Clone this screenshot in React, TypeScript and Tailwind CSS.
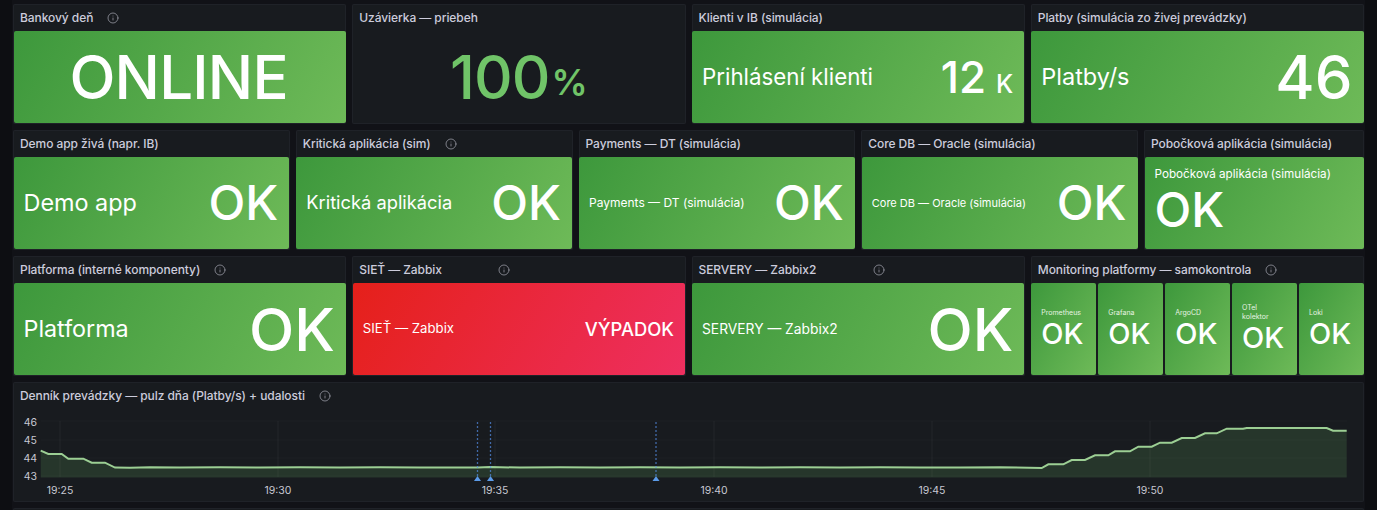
import { Info } from "lucide-react"
import type { ReactNode } from "react"

const green = "bg-[linear-gradient(120deg,#3d983c,#6eba58)]"
const red = "bg-[linear-gradient(120deg,#e5201a,#ee2f60)]"

function Panel({ title, info, gap = "ml-[14px]", children }: { title: string; info?: boolean; gap?: string; children: ReactNode }) {
	return (
		<div className="flex h-[120px] flex-col rounded-[2px] bg-[#181b1f] shadow-[inset_0_0_0_1px_#1f2228]">
			<div className="flex h-[27px] shrink-0 items-center px-[7px] pt-[1px] text-[12px] font-medium tracking-[-0.07px] text-[#ccccdc]">
				<span className="whitespace-nowrap">{title}</span>
				{info && <Info size={12} strokeWidth={1.5} className={`${gap} text-[#9d9fa9]`} />}
			</div>
			<div className="flex min-h-0 flex-1 gap-[2.5px] px-[0.5px] pb-[1px]">{children}</div>
		</div>
	)
}

function Tile({ label, value, labelSize, valueSize, unit, color = green }: { label?: string; value: string; labelSize?: string; valueSize: string; unit?: string; color?: string }) {
	return (
		<div className={`flex flex-1 items-center justify-between rounded-[2px] pl-[10px] pr-[11px] text-white ${color}`}>
			<span className={`whitespace-nowrap ${labelSize}`}>{label}</span>
			<span className={`whitespace-nowrap font-medium leading-none ${valueSize}`}>
				{value}
				{unit && <span className="ml-[10px] text-[25px]">{unit}</span>}
			</span>
		</div>
	)
}

function MiniTile({ children }: { children: ReactNode }) {
	return (
		<div className={`flex flex-1 flex-col justify-center rounded-[2px] px-[10px] text-white ${green}`}>
			<span className="text-[7px] leading-[9px] text-[#e6f3e2]">{children}</span>
			<span className="text-[29px] font-medium leading-[34px]">OK</span>
		</div>
	)
}

const leftLine = "40.7,450.7 48.3,454 61.7,454 68.3,458.7 83.3,458.7 91.7,462.7 105,462.7 115,467.6 130,467.8 150,467.2 180,467.6 220,467.2 260,467.6 300,467.2 340,467.6 380,467.2 420,467.6 478,467.4 490,467 520,467.6 560,467.2 600,467.6 640,467.2 680,467.6 720,467.2 760,467.6 800,467.2 840,467.6 880,467.2 920,467.4 960,467.6 1000,467.2 1041.7,468"
const rightLine = "1048.3,464.3 1063.3,464.3 1071.7,460 1085,460 1095,455.3 1108.3,455.3 1115,451.3 1130,451.3 1138.3,446.7 1151.7,446.7 1160,442.7 1171.7,442.7 1181.7,438 1195,438 1205,433.3 1216.7,433.3 1226.7,428.7 1243,428.7 1246.7,428 1326.7,428 1333,430.7 1346.7,430.7"
const line = `${leftLine} ${rightLine}`

function Chart() {
	const ticks = [
		{ x: 60, t: "19:25" },
		{ x: 278, t: "19:30" },
		{ x: 495, t: "19:35" },
		{ x: 714, t: "19:40" },
		{ x: 932, t: "19:45" },
		{ x: 1150, t: "19:50" },
	]
	return (
		<svg viewBox="13 409 1351 92" className="h-[92px] w-[1351px]">
			{[421, 440, 458, 476].map(y => (
				<line key={y} x1="41" x2="1347" y1={y} y2={y} stroke="#ffffff" strokeOpacity="0.025" />
			))}
			{ticks.map(k => (
				<line key={k.x} x1={k.x} x2={k.x} y1="421" y2="477" stroke="#ffffff" strokeOpacity="0.05" />
			))}
			<polygon points={`40.7,477.5 ${line} 1346.7,477.5`} fill="#73bf69" fillOpacity="0.17" />
			<polyline points={line} fill="none" stroke="#9ccf94" strokeWidth="2" />
			{[477.5, 490.5, 656].map(x => (
				<g key={x}>
					<line x1={x} x2={x} y1="422" y2="477" stroke="#5794f2" strokeOpacity="0.65" strokeWidth="1.3" strokeDasharray="2 2" />
					<polygon points={`${x - 3.5},481 ${x + 3.5},481 ${x},476`} fill="#5b9be8" />
				</g>
			))}
			<g fontSize="10.5" fill="#c7c8d2" fontFamily="Inter, sans-serif">
				<text x="37" y="425.5" textAnchor="end">46</text>
				<text x="37" y="444" textAnchor="end">45</text>
				<text x="37" y="462" textAnchor="end">44</text>
				<text x="37" y="480" textAnchor="end">43</text>
				{ticks.map(k => (
					<text key={k.x} x={k.x} y="493.5" textAnchor="middle">{k.t}</text>
				))}
			</g>
		</svg>
	)
}

export default function App() {
	return (
		<div className="h-[510px] w-[1377px] overflow-hidden bg-[#0d0e12] px-[12px] font-['Inter',sans-serif]">
			<div className="flex h-full flex-col gap-[6px] bg-[#111217] px-[1px] pt-[4px]">
				<div className="grid shrink-0 grid-cols-4 gap-[6px]">
					<Panel title="Bankový deň" info>
						<div className={`flex flex-1 items-center justify-center rounded-[2px] pr-[2px] text-[60px] font-medium leading-none tracking-[-0.8px] text-white ${green}`}>ONLINE</div>
					</Panel>
					<Panel title="Uzávierka — priebeh">
						<div className="flex flex-1 items-center justify-center leading-none text-[#70c468]">
							<span className="text-[60px] font-medium tracking-[-1px]">100</span>
							<span className="ml-[2px] mt-[10px] text-[36px] font-semibold">%</span>
						</div>
					</Panel>
					<Panel title="Klienti v IB (simulácia)">
						<Tile label="Prihlásení klienti" labelSize="text-[22.3px]" value="12" valueSize="text-[44px]" unit="K" />
					</Panel>
					<Panel title="Platby (simulácia zo živej prevádzky)">
						<Tile label="Platby/s" labelSize="text-[23.5px]" value="46" valueSize="text-[60px]" />
					</Panel>
				</div>
				<div className="grid shrink-0 grid-cols-[276.75px_276.75px_276.75px_276.75px_1fr] gap-[6px]">
					<Panel title="Demo app živá (napr. IB)">
						<Tile label="Demo app" labelSize="text-[23.4px]" value="OK" valueSize="text-[48px]" />
					</Panel>
					<Panel title="Kritická aplikácia (sim)" info>
						<Tile label="Kritická aplikácia" labelSize="text-[18.3px]" value="OK" valueSize="text-[48px]" />
					</Panel>
					<Panel title="Payments — DT (simulácia)">
						<Tile label="Payments — DT (simulácia)" labelSize="text-[12px]" value="OK" valueSize="text-[48px]" />
					</Panel>
					<Panel title="Core DB — Oracle (simulácia)">
						<Tile label="Core DB — Oracle (simulácia)" labelSize="text-[11px]" value="OK" valueSize="text-[48px]" />
					</Panel>
					<Panel title="Pobočková aplikácia (simulácia)">
						<div className={`flex flex-1 flex-col justify-center rounded-[2px] px-[10px] text-white ${green}`}>
							<span className="text-[11.7px] leading-[14px]">Pobočková aplikácia (simulácia)</span>
							<span className="text-[48px] font-medium leading-[58px]">OK</span>
						</div>
					</Panel>
				</div>
				<div className="grid shrink-0 grid-cols-4 gap-[6px]">
					<Panel title="Platforma (interné komponenty)" info>
						<Tile label="Platforma" labelSize="text-[23.3px]" value="OK" valueSize="text-[59px]" />
					</Panel>
					<Panel title="SIEŤ — Zabbix" info gap="ml-[56px]">
						<Tile label="SIEŤ — Zabbix" labelSize="text-[13.2px]" value="VÝPADOK" valueSize="text-[18.4px]" color={red} />
					</Panel>
					<Panel title="SERVERY — Zabbix2" info gap="ml-[57px]">
						<Tile label="SERVERY — Zabbix2" labelSize="text-[13.8px]" value="OK" valueSize="text-[59px]" />
					</Panel>
					<Panel title="Monitoring platformy — samokontrola" info>
						<MiniTile>Prometheus</MiniTile>
						<MiniTile>Grafana</MiniTile>
						<MiniTile>ArgoCD</MiniTile>
						<MiniTile>
							OTel
							<br />
							kolektor
						</MiniTile>
						<MiniTile>Loki</MiniTile>
					</Panel>
				</div>
				<div className="flex h-[120px] shrink-0 flex-col rounded-[2px] bg-[#181b1f] shadow-[inset_0_0_0_1px_#1f2228]">
					<div className="flex h-[27px] shrink-0 items-center px-[7px] pt-[1px] text-[12px] font-medium tracking-[-0.07px] text-[#ccccdc]">
						<span>Denník prevádzky — pulz dňa (Platby/s) + udalosti</span>
						<Info size={12} strokeWidth={1.5} className="ml-[14px] text-[#9d9fa9]" />
					</div>
					<Chart />
				</div>
				<div className="h-[20px] shrink-0 rounded-[2px] bg-[#181b1f] shadow-[inset_0_0_0_1px_#1f2228]" />
			</div>
		</div>
	)
}
